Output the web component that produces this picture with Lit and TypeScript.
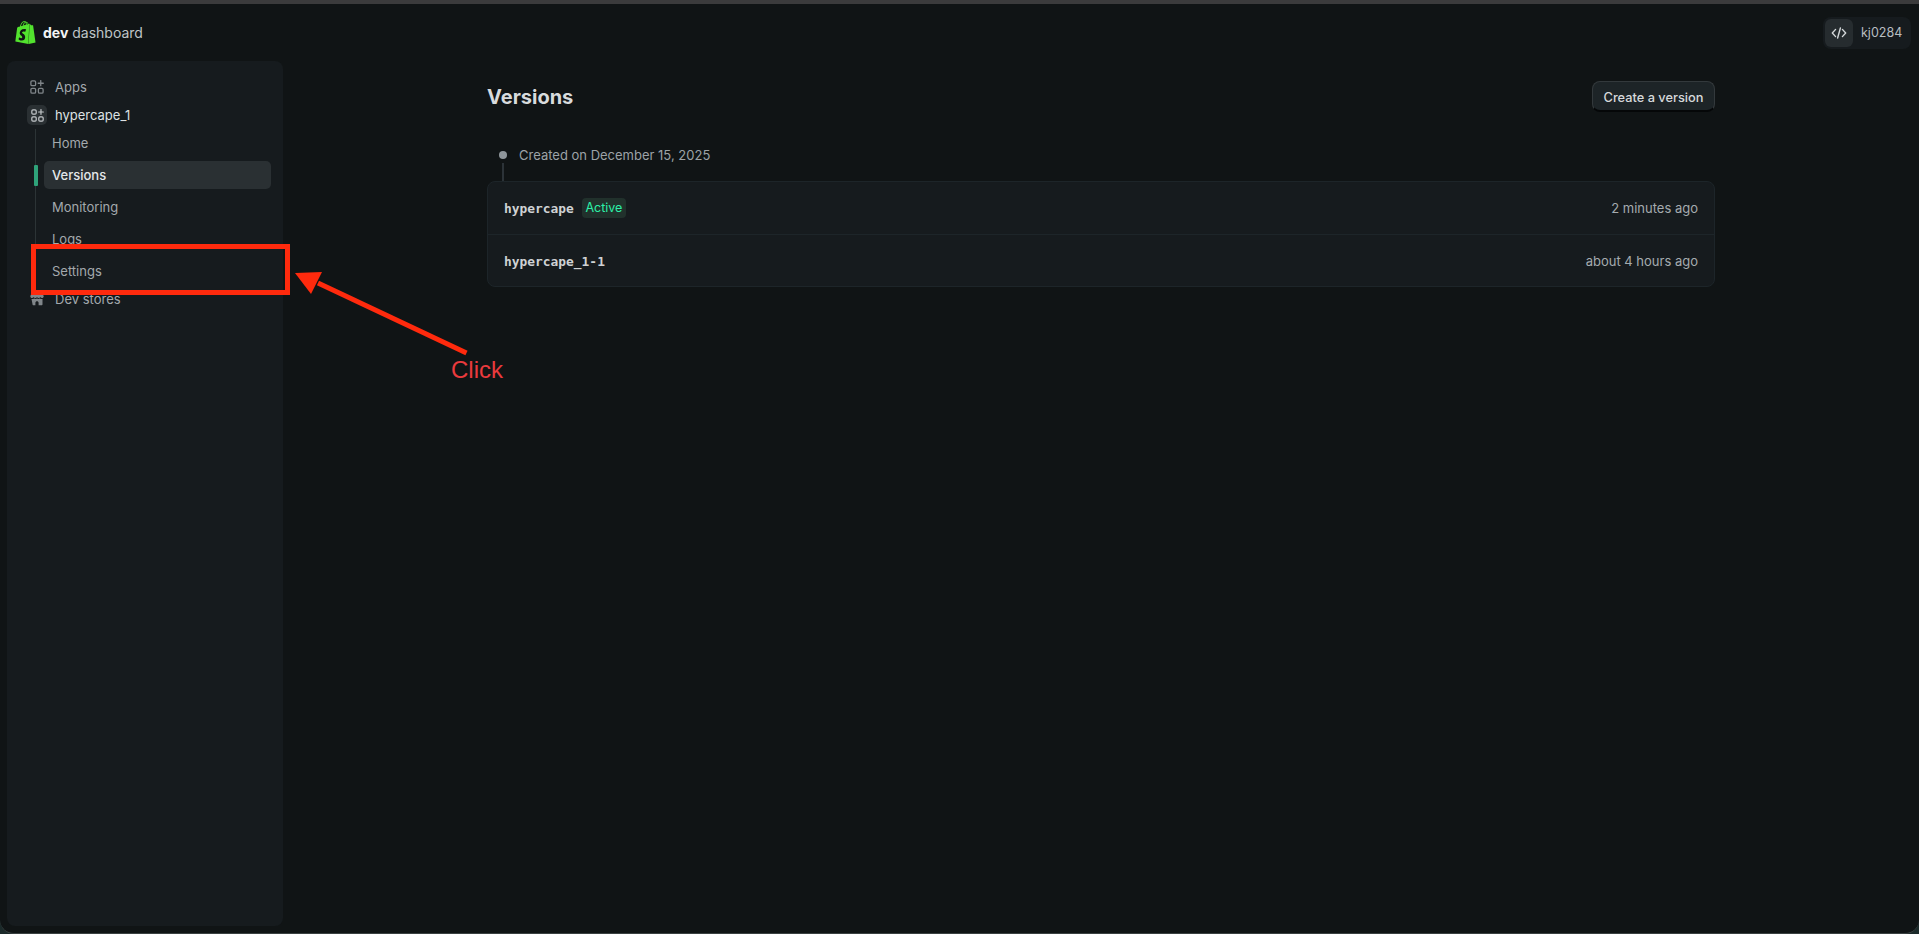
import { LitElement, html, css, svg } from "lit";
import { customElement } from "lit/decorators.js";

const appsIcon = html`<svg class="nav-icon" viewBox="0 0 14 14" fill="none" stroke="currentColor" stroke-width="1.3">
  <rect x="0.9" y="0.9" width="4.7" height="4.7" rx="1.2" />
  <rect x="0.9" y="8.4" width="4.7" height="4.7" rx="1.2" />
  <rect x="8.4" y="8.4" width="4.7" height="4.7" rx="1.2" />
  <path d="M10.75 0.6v5.1M8.2 3.25h5.1" stroke-linecap="round" />
</svg>`;

const storeIcon = html`<svg class="nav-icon" viewBox="0 0 14 14" fill="currentColor">
  <path d="M1.6 0.8h10.8l1.3 3.4c0 1.1-.8 1.8-1.7 1.8-.7 0-1.3-.4-1.7-1-.3.6-1 1-1.7 1s-1.3-.4-1.6-1c-.3.6-.9 1-1.6 1s-1.4-.4-1.7-1c-.4.6-1 1-1.7 1-.9 0-1.7-.7-1.7-1.8z" />
  <path fill-rule="evenodd" d="M1.5 7c.9.2 1.8 0 2.6-.5.9.6 2 .6 2.9.1.9.5 2 .5 2.9-.1.8.5 1.7.7 2.6.5v5.2c0 .6-.4 1-1 1h-8c-.6 0-1-.4-1-1zM5.4 13.2v-2.4c0-.9.7-1.6 1.6-1.6s1.6.7 1.6 1.6v2.4z" />
</svg>`;

const shopifyLogo = html`<svg class="logo" viewBox="0 0 24 24" fill="#52e32e">
  <path d="M15.337 23.979l7.216-1.561s-2.604-17.613-2.625-17.73c-.018-.116-.114-.192-.211-.192s-1.929-.136-1.929-.136-1.275-1.274-1.439-1.411c-.045-.037-.075-.057-.121-.074l-.914 21.104h.023zM11.71 11.305s-.81-.424-1.774-.424c-1.447 0-1.504.906-1.504 1.141 0 1.232 3.24 1.715 3.24 4.629 0 2.295-1.44 3.76-3.406 3.76-2.354 0-3.54-1.465-3.54-1.465l.646-2.086s1.245 1.066 2.28 1.066c.675 0 .975-.545.975-.932 0-1.619-2.654-1.694-2.654-4.359-.034-2.237 1.571-4.416 4.827-4.416 1.257 0 1.875.361 1.875.361l-.945 2.715-.02.01zM11.17.83c.136 0 .271.038.405.135-.984.465-2.064 1.639-2.508 3.992-.656.213-1.293.405-1.889.578C7.697 3.75 8.951.84 11.17.84V.83zm1.235 2.949v.135c-.754.232-1.583.484-2.394.736.466-1.777 1.333-2.645 2.085-2.971.193.501.309 1.176.309 2.1zm.539-2.234c.694.074 1.141.867 1.429 1.755-.349.114-.735.231-1.158.366v-.252c0-.752-.096-1.371-.271-1.871v.002zm2.992 1.289c-.02 0-.06.021-.078.021s-.289.075-.714.21c-.423-1.233-1.176-2.37-2.508-2.37h-.115C12.135.209 11.669 0 11.265 0 8.159 0 6.675 3.877 6.21 5.846c-1.194.365-2.063.636-2.16.674-.675.213-.694.232-.772.87-.075.462-1.83 14.063-1.83 14.063L15.009 24l.927-21.166z" />
</svg>`;

const subItems = ["Home", "Versions", "Monitoring", "Logs", "Settings"];

const versions = [
  { name: "hypercape", active: true, time: "2 minutes ago" },
  { name: "hypercape_1-1", active: false, time: "about 4 hours ago" },
];

@customElement("app-root")
export class AppRoot extends LitElement {
  static styles = css`
    :host {
      display: block;
      width: 1919px;
      height: 934px;
      overflow: hidden;
      position: relative;
      background: #1b2a2a;
      font-family: Inter, "Liberation Sans", sans-serif;
      font-size: 13px;
    }
    .window {
      height: 934px;
      box-sizing: border-box;
      background: #101415;
      border-radius: 0 0 14px 14px;
      border-bottom: 1px solid #3a4141;
      display: flex;
      flex-direction: column;
    }
    .topline {
      height: 4px;
      flex: none;
      background: #3b3b3c;
    }
    .header {
      height: 57px;
      flex: none;
      box-sizing: border-box;
      display: flex;
      align-items: center;
      justify-content: space-between;
      padding: 0 8px 0 14px;
    }
    .brand {
      display: flex;
      align-items: center;
      gap: 6px;
      font-size: 14px;
      color: #bfc4c7;
    }
    .brand b {
      color: #f3f4f5;
      font-weight: 700;
    }
    .logo {
      width: 23px;
      height: 25px;
    }
    .user {
      width: 88px;
      height: 32px;
      box-sizing: border-box;
      padding: 2px;
      display: flex;
      align-items: center;
      gap: 8px;
      border-radius: 8px;
      background: #161b1e;
      color: #b9bec1;
      font-size: 12.5px;
    }
    .user-icon {
      width: 28px;
      height: 28px;
      border-radius: 6px;
      background: #262c2f;
      display: flex;
      align-items: center;
      justify-content: center;
      color: #d4d8da;
    }
    .user-icon svg {
      width: 16px;
      height: 16px;
    }
    .body {
      flex: 1;
      display: flex;
      padding: 0 0 7px 7px;
    }
    .sidebar {
      width: 276px;
      flex: none;
      box-sizing: border-box;
      padding: 16px 12px;
      background: #161b1e;
      border-radius: 8px;
      color: #a3a9ad;
    }
    .nav-top {
      height: 20px;
      display: flex;
      align-items: center;
      gap: 11px;
      margin-bottom: 8px;
      padding-left: 11px;
    }
    .nav-icon {
      width: 14px;
      height: 14px;
      flex: none;
      color: #80868a;
    }
    .nav-top.current {
      color: #dde1e3;
      padding-left: 8px;
      gap: 8px;
    }
    .icon-box {
      width: 20px;
      height: 20px;
      border-radius: 5px;
      background: #2a3033;
      display: flex;
      align-items: center;
      justify-content: center;
    }
    .icon-box .nav-icon {
      width: 13px;
      height: 13px;
      color: #c4c8cb;
    }
    .sub {
      margin: -6px 0 0 16px;
      height: 118px;
      position: relative;
    }
    .sub::before {
      content: "";
      position: absolute;
      left: 0;
      top: 2px;
      bottom: 0;
      width: 1px;
      background: #2c3436;
    }
    .sub-item {
      height: 32px;
      box-sizing: border-box;
      margin-left: 9px;
      width: 227px;
      padding-left: 8px;
      display: flex;
      align-items: center;
      position: relative;
    }
    .sub-item.selected {
      height: 28px;
      margin: 2px 0 2px 9px;
      border-radius: 5px;
      background: #2a3033;
      color: #e4e7e9;
      font-weight: 500;
    }
    .sub-item.selected::before {
      content: "";
      position: absolute;
      left: -10px;
      top: 4px;
      width: 4px;
      height: 21px;
      border-radius: 1px;
      background: #2fa37a;
    }
    .gap {
      height: 44px;
    }
    .main {
      flex: 1;
      box-sizing: border-box;
      padding: 20px 0 0 204px;
    }
    .content {
      width: 1228px;
    }
    .title-row {
      height: 31px;
      display: flex;
      align-items: center;
      justify-content: space-between;
    }
    h1 {
      margin: 0;
      padding-top: 2px;
      font-size: 20px;
      line-height: 31px;
      font-weight: 700;
      color: #d8dbdd;
    }
    .create {
      width: 123px;
      height: 31px;
      box-sizing: border-box;
      border: 1px solid #33393c;
      border-bottom: 2px solid #050708;
      outline: none;
      border-radius: 8px;
      background: #1d2427;
      color: #d6d9db;
      font: 450 12.8px Inter, "Liberation Sans", sans-serif;
      padding: 2px 0 0;
    }
    .timeline {
      margin-top: 31px;
      height: 38px;
      padding-left: 32px;
      color: #9da3a7;
      font-size: 13px;
      line-height: 24px;
      position: relative;
    }
    .timeline::before {
      content: "";
      position: absolute;
      left: 12px;
      top: 8px;
      width: 8px;
      height: 8px;
      border-radius: 50%;
      background: #8f969b;
    }
    .timeline::after {
      content: "";
      position: absolute;
      left: 15px;
      top: 20px;
      bottom: 0;
      width: 2px;
      background: #2c3338;
    }
    .card {
      background: #161b1e;
      border: 1px solid #1d2529;
      border-radius: 8px;
      box-sizing: border-box;
      height: 106px;
      overflow: hidden;
    }
    .row {
      height: 52px;
      box-sizing: border-box;
      padding: 0 16px;
      display: flex;
      align-items: center;
      color: #a5abaf;
      font-size: 13px;
    }
    .row + .row {
      height: 53px;
      border-top: 1px solid #1d2529;
    }
    .name {
      font-family: "DejaVu Sans Mono", "Liberation Mono", monospace;
      font-size: 12.9px;
      font-weight: 700;
      color: #cfd2d4;
    }
    .badge {
      margin-left: 8px;
      height: 20px;
      width: 44px;
      box-sizing: border-box;
      border-radius: 4px;
      background: #21312c;
      color: #2cf0a8;
      font-size: 12.5px;
      line-height: 20px;
      text-align: center;
    }
    .time {
      margin-left: auto;
    }
    .marks {
      position: absolute;
      inset: 0;
      width: 1919px;
      height: 934px;
      pointer-events: none;
    }
    .click-label {
      position: absolute;
      left: 451px;
      top: 356px;
      font: 24px "Liberation Sans", Arial, sans-serif;
      line-height: 28px;
      color: #ea3a3d;
    }
  `;

  render() {
    return html`
      <div class="window">
        <div class="topline"></div>
        <div class="header">
          <div class="brand">${shopifyLogo}<span><b>dev</b> dashboard</span></div>
          <div class="user">
            <div class="user-icon">
              <svg viewBox="0 0 16 16" fill="none" stroke="currentColor" stroke-width="1.4" stroke-linecap="round" stroke-linejoin="round">
                <path d="M4.6 4.4 1.3 8l3.3 3.6M11.4 4.4 14.7 8l-3.3 3.6M9.4 3 6.6 13" />
              </svg>
            </div>
            <span>kj0284</span>
          </div>
        </div>
        <div class="body">
          <nav class="sidebar">
            <div class="nav-top">${appsIcon}<span>Apps</span></div>
            <div class="nav-top current">
              <div class="icon-box">${appsIcon}</div>
              <span>hypercape_1</span>
            </div>
            <div class="sub">
              ${subItems.map(
                (s) => html`<div class="sub-item ${s === "Versions" ? "selected" : ""}">${s}</div>`
              )}
            </div>
            <div class="gap"></div>
            <div class="nav-top">${storeIcon}<span>Dev stores</span></div>
          </nav>
          <main class="main">
            <div class="content">
              <div class="title-row">
                <h1>Versions</h1>
                <button class="create">Create a version</button>
              </div>
              <div class="timeline">Created on December 15, 2025</div>
              <div class="card">
                ${versions.map(
                  (v) => html`<div class="row">
                    <span class="name">${v.name}</span>
                    ${v.active ? html`<span class="badge">Active</span>` : ""}
                    <span class="time">${v.time}</span>
                  </div>`
                )}
              </div>
            </div>
          </main>
        </div>
      </div>
      <svg class="marks" viewBox="0 0 1919 934">
        ${svg`<rect x="33.5" y="246.5" width="254" height="46" fill="none" stroke="#ff2a0d" stroke-width="5" />
        <path d="M466.5 353 L318 283" stroke="#ff2a0d" stroke-width="5" fill="none" />
        <path d="M295 273 L322 272 L311 294 Z" fill="#ff2a0d" />`}
      </svg>
      <div class="click-label">Click</div>
    `;
  }
}
